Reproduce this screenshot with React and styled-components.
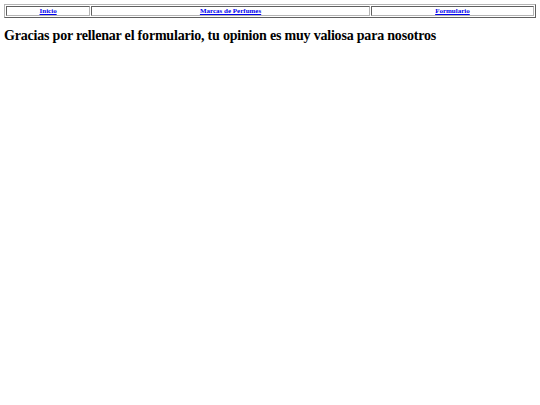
import React from 'react';
import styled, { createGlobalStyle } from 'styled-components';

const Global = createGlobalStyle`
  body {
    margin: 4px;
    background: #fff;
    font-family: "Liberation Serif", "Times New Roman", serif;
    color: #000;
  }
`;

const Nav = styled.table`
  width: 100%;
  border: 1px outset #b4b4b4;
  border-spacing: 1px;
  font-size: 7px;
`;

const Cell = styled.td`
  width: ${props => props.w};
  border: 1px inset #b4b4b4;
  padding: 1px;
  text-align: center;
  font-weight: bold;
  line-height: 6px;
`;

const Link = styled.a`
  color: #0000ee;
  text-decoration: underline;
`;

const Title = styled.h1`
  font-size: 14px;
  letter-spacing: -0.2px;
  font-weight: bold;
  margin: 10px 0;
`;

export default function App() {
  return (
    <>
      <Global />
      <Nav>
        <tbody>
          <tr>
            <Cell w="16%"><Link href="#">Inicio</Link></Cell>
            <Cell w="53%"><Link href="#">Marcas de Perfumes</Link></Cell>
            <Cell w="31%"><Link href="#">Formulario</Link></Cell>
          </tr>
        </tbody>
      </Nav>
      <Title>Gracias por rellenar el formulario, tu opinion es muy valiosa para nosotros</Title>
    </>
  );
}
